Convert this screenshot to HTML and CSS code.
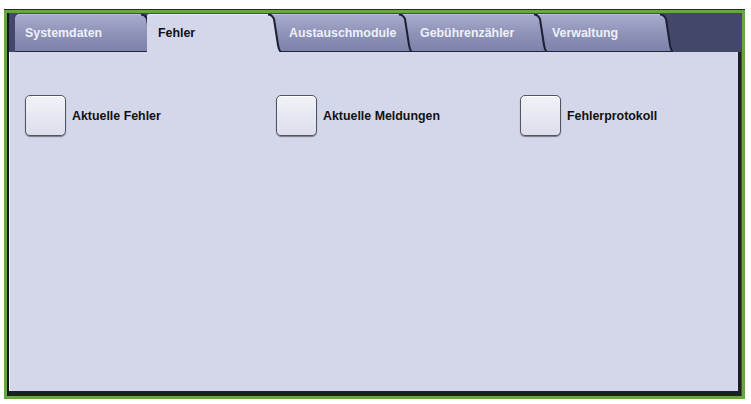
FILE: index.html
```html
<!DOCTYPE html>
<html lang="de">
<head>
<meta charset="utf-8">
<title>Fehler</title>
<link rel="stylesheet" href="styles.css">
</head>
<body>
<svg class="defs" width="0" height="0" aria-hidden="true">
  <defs>
    <linearGradient id="tabg" x1="0" y1="0" x2="0" y2="1">
      <stop offset="0" stop-color="#a9adcd"/>
      <stop offset="0.5" stop-color="#8e93b8"/>
      <stop offset="1" stop-color="#7c81a8"/>
    </linearGradient>
  </defs>
</svg>
<div class="frame">
  <div class="tabs">
    <div class="tab t1">
      <div class="tab-body"><span>Systemdaten</span></div>
      <svg class="cap" viewBox="0 0 14 38"><path class="cap-fill" d="M0,0 H1 Q5,0 7,5 L11,31 Q12,37 14,38 H0 Z"/><path class="cap-edge" d="M1,0.5 Q5,0.5 7,5 L11,31 Q12,37 14,38"/><path class="cap-base" d="M0,37.5 H14"/></svg>
    </div>
    <div class="tab t2 active">
      <div class="tab-body"><span>Fehler</span></div>
      <svg class="cap" viewBox="0 0 14 38"><path class="cap-fill" d="M0,0 H1 Q5,0 7,5 L11,31 Q12,37 14,38 H0 Z"/><path class="cap-edge" d="M1,0.5 Q5,0.5 7,5 L11,31 Q12,37 14,38"/></svg>
    </div>
    <div class="tab t3">
      <div class="tab-body"><span>Austauschmodule</span></div>
      <svg class="cap" viewBox="0 0 14 38"><path class="cap-fill" d="M0,0 H1 Q5,0 7,5 L11,31 Q12,37 14,38 H0 Z"/><path class="cap-edge" d="M1,0.5 Q5,0.5 7,5 L11,31 Q12,37 14,38"/><path class="cap-base" d="M0,37.5 H14"/></svg>
    </div>
    <div class="tab t4">
      <div class="tab-body"><span>Gebührenzähler</span></div>
      <svg class="cap" viewBox="0 0 14 38"><path class="cap-fill" d="M0,0 H1 Q5,0 7,5 L11,31 Q12,37 14,38 H0 Z"/><path class="cap-edge" d="M1,0.5 Q5,0.5 7,5 L11,31 Q12,37 14,38"/><path class="cap-base" d="M0,37.5 H14"/></svg>
    </div>
    <div class="tab t5">
      <div class="tab-body"><span>Verwaltung</span></div>
      <svg class="cap" viewBox="0 0 14 38"><path class="cap-fill" d="M0,0 H1 Q5,0 7,5 L11,31 Q12,37 14,38 H0 Z"/><path class="cap-edge" d="M1,0.5 Q5,0.5 7,5 L11,31 Q12,37 14,38"/><path class="cap-base" d="M0,37.5 H14"/></svg>
    </div>
  </div>
  <div class="panel">
    <div class="options">
      <div class="option"><span class="btn"></span><span class="label">Aktuelle Fehler</span></div>
      <div class="option"><span class="btn"></span><span class="label">Aktuelle Meldungen</span></div>
      <div class="option"><span class="btn"></span><span class="label">Fehlerprotokoll</span></div>
    </div>
  </div>
</div>
</body>
</html>
```
FILE: styles.css
```css
html, body {
  margin: 0;
  background: #ffffff;
}
body {
  font-family: "Liberation Sans", Arial, sans-serif;
}
.defs {
  position: absolute;
  width: 0;
  height: 0;
}
.frame {
  box-sizing: border-box;
  width: 741px;
  height: 389px;
  margin: 10px 0 0 4px;
  border: 3px solid #63a845;
  background: #434769;
  padding: 1px 4px 0 2px;
  display: flex;
  flex-direction: column;
  box-shadow: inset 2px 0 0 #15161f, 0 -1px 0 #2a2a2a;
}
.tabs {
  display: flex;
  height: 38px;
  padding-left: 6px;
}
.tab {
  position: relative;
  display: flex;
  height: 38px;
  flex: none;
}
.tab-body {
  display: flex;
  align-items: center;
  box-sizing: border-box;
  height: 38px;
  padding-bottom: 1px;
  font-size: 12.4px;
  font-weight: bold;
  color: #eef0f8;
  background: linear-gradient(#a9adcd, #8e93b8 50%, #7c81a8);
  border-top-left-radius: 5px;
  box-shadow: inset 0 -1px 0 #23253c, inset 0 1px 0 #bcc0dc;
}
.cap {
  display: block;
  width: 14px;
  height: 38px;
  flex: none;
}
.cap-fill {
  fill: url(#tabg);
}
.cap-edge {
  fill: none;
  stroke: #1d1f34;
  stroke-width: 2;
}
.cap-base {
  stroke: #23253c;
  stroke-width: 1;
}
.active .tab-body {
  color: #111111;
  background: #d4d7e9;
  box-shadow: inset 0 1px 0 #eceef7;
  border-top-left-radius: 3px;
}
.active .cap-fill {
  fill: #d4d7e9;
}
.t1 { z-index: 5; }
.t1 .tab-body { width: 125px; padding-left: 10px; }
.t2 { z-index: 10; margin-left: -7px; }
.t2 .tab-body { width: 120px; padding-left: 11px; }
.t3 { z-index: 4; margin-left: -12px; }
.t3 .tab-body { width: 129px; padding-left: 20px; }
.t4 { z-index: 3; margin-left: -12px; }
.t4 .tab-body { width: 133px; padding-left: 20px; }
.t5 { z-index: 2; margin-left: -12px; }
.t5 .tab-body { width: 124px; padding-left: 17px; }
.panel {
  width: 729px;
  height: 339px;
  flex: none;
  background: #d4d7e9;
  box-shadow: 3px 0 0 #1c1d2b, 0 5px 0 #1c1d2b, 3px 5px 0 #1c1d2b, inset 1px 0 0 #f0f1f8;
}
.options {
  display: grid;
  grid-template-columns: 251px 244px auto;
  padding: 43px 0 0 16px;
}
.option {
  display: flex;
  align-items: center;
  gap: 6px;
}
.btn {
  display: block;
  box-sizing: border-box;
  width: 41px;
  height: 41px;
  flex: none;
  border: 1.5px solid #525461;
  border-radius: 5px;
  background: linear-gradient(#f2f3f9, #dcdeeb);
  box-shadow: 0 1px 1px rgba(0, 0, 0, 0.45), inset 0 1px 0 #ffffff;
}
.label {
  font-size: 12.4px;
  font-weight: bold;
  color: #111111;
}
```
